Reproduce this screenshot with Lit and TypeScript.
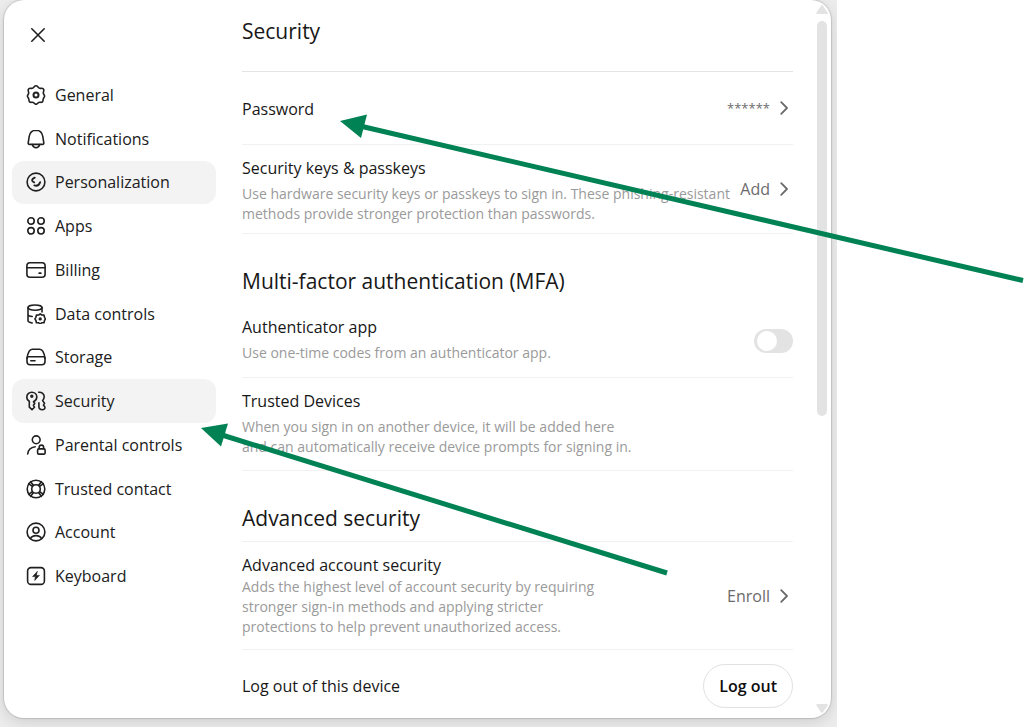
import { LitElement, html, css, svg, nothing, TemplateResult } from "lit";
import { customElement, property, state } from "lit/decorators.js";
import { classMap } from "lit/directives/class-map.js";

const icons: Record<string, TemplateResult> = {
  general: svg`<path d="M10 .8c1.500 0 2 1.700 3.200 2.300 1.300.7 3.200-.4 4.200.8 1.100 1.400-.1 2.700-.1 4 0 1.400 1.300 2.100 1.300 3.200s-.9 1.700-1.300 2.600c-.5 1.200.2 2.500-1 3.300-1.200.8-2.400-.1-3.500.4-1.100.5-1.500 1.900-2.800 1.900s-1.700-1.400-2.800-1.900c-1.100-.5-2.300.4-3.500-.4-1.200-.8-.5-2.100-1-3.300-.4-.9-1.300-1.500-1.300-2.600s1.300-1.800 1.300-3.200c0-1.300-1.200-2.600-.1-4 1-1.200 2.900-.1 4.200-.8C8 2.500 8.500.8 10 .8z"/><circle cx="10" cy="10" r="2.500" stroke-width="2"/>`,
  notifications: svg`<path d="M10 1.200c-3.800 0-6.300 2.800-6.800 6.300l-1 6.400c-.1.900.4 1.500 1.200 1.500h13.200c.8 0 1.300-.6 1.200-1.500l-1-6.400C16.300 4 13.800 1.200 10 1.200z"/><path d="M6.300 15.600c.6 2 2 3.200 3.700 3.200s3.100-1.200 3.700-3.200"/>`,
  personalization: svg`<circle cx="10" cy="10" r="8.900"/><path d="M8.800 5.600C7 6.300 6 7.300 6.100 8.500c.1 1 .9 1.500 2.100 1.900" stroke-width="1.800"/><path d="M8.300 13.400c2.700.9 5-.6 5.900-3.300" stroke-width="1.800"/>`,
  apps: svg`<circle cx="5" cy="5" r="3.200"/><circle cx="15" cy="5" r="3.200"/><circle cx="5" cy="14.800" r="3.200"/><circle cx="15" cy="14.800" r="3.200"/>`,
  billing: svg`<rect x=".9" y="2.700" width="18.200" height="14.600" rx="3"/><path d="M1 7.700h18"/><path d="M13.200 13.200h1.600" stroke-width="1.800"/>`,
  data: svg`<ellipse cx="9" cy="3.600" rx="7" ry="2.600"/><path d="M2 3.600v13c0 1.300 1.700 2.100 4.200 2.400M16 3.600v4.300M2 10.200c0 1.200 1.700 2 4.200 2.300"/><path d="M14.200 9.900l1.500 1.100 2.300.1.500 2.200 1 1.600-1 1.600-.5 2.200-2.300.1-1.500 1.100-1.500-1.100-2.300-.1-.5-2.200-1-1.600 1-1.600.5-2.200 2.300-.1z"/><circle cx="14.200" cy="14.900" r=".9"/>`,
  storage: svg`<path d="M1 11.300c.3-2.600 1-5 2.100-6.900C3.800 3 4.800 2.200 6.300 2.200h7.400c1.500 0 2.500.8 3.200 2.200 1.100 1.900 1.800 4.300 2.100 6.900"/><path d="M1 11.200c0-.9.600-1.400 1.500-1.400h15c.9 0 1.500.5 1.500 1.400v3.300c0 2-1.200 3.300-3.200 3.300H4.200c-2 0-3.200-1.300-3.200-3.300z"/><path d="M4.800 13.700h4.200"/>`,
  security: svg`<path d="M5.800 1.200C3 1.200.8 3.300.8 6c0 1.900.9 3.400 2.500 4.300v5.900l2.700 2.500 2.500-2.500-1.100-1.900 1.400-1.900-1.300-1.700C9.700 9.700 10.800 8.200 10.800 6c0-2.700-2.200-4.800-5-4.800z"/><circle cx="5.800" cy="5.200" r=".9"/><path d="M12.700 1.300c3.200-.3 5.500 1.600 5.500 4.500 0 1.500-.5 2.700-1.600 3.700l2 2.900-1.200 1.700 1.500 2c.3 1.600-.9 2.600-2.500 2.600-2 0-3.500-1-3.500-2.900v-4"/>`,
  parental: svg`<circle cx="10.200" cy="4.800" r="3.900"/><path d="M1.700 19c.4-4 3.200-6.700 7.500-7.300"/><rect x="11.600" y="13.900" width="7.500" height="5.200" rx="1.200"/><path d="M13.200 13.700v-1.400c0-1.300.9-2.200 2.200-2.200s2.200.9 2.200 2.200v1.400"/>`,
  trusted: svg`<circle cx="10" cy="10" r="8.800"/><circle cx="10" cy="10" r="4.300"/><path d="M4.600 2.700l2.800 3.600M2.700 4.600l3.600 2.800M15.400 2.700l-2.800 3.600M17.300 4.600l-3.600 2.800M4.600 17.300l2.800-3.600M2.700 15.400l3.600-2.800M15.400 17.300l-2.800-3.600M17.300 15.400l-3.600-2.800"/>`,
  account: svg`<circle cx="10" cy="10" r="8.900"/><circle cx="10" cy="8.200" r="3"/><path d="M4.400 16.700c.9-2 3-3.100 5.600-3.100s4.700 1.100 5.600 3.100"/>`,
  keyboard: svg`<rect x="1.600" y="1.600" width="16.800" height="16.800" rx="3.400"/><path d="M11.200 5.600L6.600 10.600h2.800l-.7 3.900 4.700-5.100h-2.900z" fill="currentColor" stroke-width=".6"/>`,
};

const sections: [string, string][] = [
  ["general", "General"],
  ["notifications", "Notifications"],
  ["personalization", "Personalization"],
  ["apps", "Apps"],
  ["billing", "Billing"],
  ["data", "Data controls"],
  ["storage", "Storage"],
  ["security", "Security"],
  ["parental", "Parental controls"],
  ["trusted", "Trusted contact"],
  ["account", "Account"],
  ["keyboard", "Keyboard"],
];

@customElement("settings-nav")
class SettingsNav extends LitElement {
  @state() current = "security";
  static styles = css`
    :host { display: block; color: #202020; }
    .close {
      display: flex; align-items: center; justify-content: center;
      width: 36px; height: 36px; margin: 17px 0 20px 8px; padding: 0;
      border: 0; border-radius: 8px; background: none; color: inherit;
    }
    .list { display: grid; grid-auto-rows: 1fr; min-height: 525px; }
    .item {
      display: flex; align-items: center; gap: 9px; padding: 0 14px;
      border: 0; border-radius: 12px; background: none; color: inherit;
      font: inherit; font-size: 16px; line-height: 24px; text-align: left;
    }
    .item.shaded { background: #f3f3f3; }
    svg {
      width: 20px; height: 20px; flex: none; fill: none; stroke: currentColor;
      stroke-width: 1.6; stroke-linecap: round; stroke-linejoin: round;
    }
    .close svg { width: 16px; height: 16px; }
  `;
  render() {
    return html`
      <button class="close" aria-label="Close">
        <svg viewBox="0 0 16 16"><path d="M1.800 1.800l12.400 12.400M14.200 1.800L1.800 14.200" /></svg>
      </button>
      <nav class="list" aria-label="Settings">
        ${sections.map(([id, label]) => html`
          <button
            class=${classMap({ item: true, shaded: id === this.current || id === "personalization" })}
            aria-current=${id === this.current ? "page" : nothing}
            @click=${() => (this.current = id)}
          ><svg viewBox="0 0 20 20" aria-hidden="true">${icons[id]}</svg><span>${label}</span></button>
        `)}
      </nav>
    `;
  }
}

@customElement("setting-row")
class SettingRow extends LitElement {
  @property() heading = "";
  @property({ attribute: false }) lines: string[] = [];
  static styles = css`
    :host {
      display: flex; align-items: center; justify-content: space-between; gap: 8px;
      border-bottom: 1px solid #f1f1f1;
    }
    .text { padding: 11px 0 13px; min-width: 0; }
    .title { margin: 0; font-size: 16px; font-weight: 400; line-height: 24px; color: #171717; }
    .desc { margin: 4px 0 0; font-size: 14px; line-height: 20px; color: #9a9a9a; }
    :host([tight]) .desc { margin-top: 0; }
    :host([tight]) .text { padding-bottom: 12px; }
    :host([plain]) { min-height: 72px; }
    :host([plain]) .text { padding: 12px 0 11px; }
    :host([roomy]) .text { padding-bottom: 14px; }
    :host([snug]) .text { padding-bottom: 9px; }
    :host([last]) { border-bottom: 0; padding: 14px 0 10px; }
    :host([last]) .text { padding: 0; }
  `;
  render() {
    return html`
      <div class="text">
        <h3 class="title">${this.heading}</h3>
        ${this.lines.length
          ? html`<p class="desc">${this.lines.map((l, i) => html`${i ? html`<br />` : nothing}${l}`)}</p>`
          : nothing}
      </div>
      <slot></slot>
    `;
  }
}

@customElement("app-root")
class AppRoot extends LitElement {
  @state() authenticator = false;
  static styles = css`
    :host {
      display: block; position: relative; min-height: 100vh; background: #fff;
      font-family: "Open Sans", "Noto Sans", sans-serif;
    }
    .page {
      display: grid; grid-template-columns: minmax(0, 837fr) minmax(0, 187fr);
      min-height: 100vh;
    }
    .backdrop { background: #ececec; padding: 0 6px 8px 4px; overflow: hidden; }
    .dialog {
      display: grid; grid-template-columns: 212px minmax(0, 1fr) 14px;
      column-gap: 24px; padding: 0 0 0 8px; min-height: calc(100vh - 9px);
      box-sizing: border-box; border-radius: 20px; background: #fff;
      box-shadow: 0 0 1px 1px #00000022, 0 4px 14px #00000020;
    }
    .nav { margin-right: 8px; }
    .main { margin-left: -6px; }
    .title, .subtitle { margin: 0; font-size: 21px; font-weight: 400; line-height: 28px; color: #171717; }
    .title { padding: 17px 0 26px; border-bottom: 1px solid #e4e4e4; }
    .subtitle { padding: 33px 0 9px; }
    .subtitle.ruled { border-bottom: 1px solid #f1f1f1; }
    .action {
      display: flex; flex: none; align-items: center; gap: 7px; padding: 0; border: 0;
      background: none; font: inherit; font-size: 16px; line-height: 24px; color: #6b6b6b;
    }
    .action .mask { font-size: 13px; }
    .action svg {
      width: 16px; height: 16px; fill: none; stroke: currentColor; stroke-width: 1.8;
      stroke-linecap: round; stroke-linejoin: round;
    }
    .switch {
      appearance: none; flex: none; width: 39px; height: 24px; margin: 0; padding: 2px 3px;
      box-sizing: border-box; border-radius: 12px; background: #e3e3e3;
    }
    .switch::before {
      content: ""; display: block; width: 20px; height: 20px; border-radius: 50%; background: #fff;
    }
    .switch:checked { background: #008255; }
    .switch:checked::before { margin-left: auto; }
    .logout {
      flex: none; height: 44px; padding: 0 15px; border: 1px solid #e1e1e1; border-radius: 22px;
      background: #fff; font: inherit; font-size: 16px; font-weight: 600; color: #0d0d0d;
    }
    .track { display: flex; flex-direction: column; width: 10px; padding: 5px 0; }
    .thumb { flex: 395 0 0; margin-top: 7px; border-radius: 5px; background: #e3e3e3; }
    .rest { flex: 288 0 0; }
    .track svg { width: 12px; height: 9px; margin-left: -1px; flex: none; fill: #e3e3e3; }
    .arrows {
      position: absolute; top: 0; left: 0; width: 100%; pointer-events: none;
      stroke: #008255; fill: #008255; stroke-width: 5;
    }
    .head { stroke: none; }
  `;
  private action(label: string, name: string, mask = false) {
    return html`
      <button class="action" aria-label=${name}>
        <span class=${classMap({ mask })}>${label}</span>
        <svg viewBox="0 0 16 16" aria-hidden="true"><path d="M4.200 2.200L10 8l-5.800 5.800" /></svg>
      </button>
    `;
  }
  render() {
    return html`
      <div class="page">
        <div class="backdrop">
          <section class="dialog" role="dialog" aria-label="Settings">
            <settings-nav class="nav"></settings-nav>
            <main class="main">
              <h1 class="title">Security</h1>
              <setting-row plain heading="Password">${this.action("******", "Change password", true)}</setting-row>
              <setting-row snug heading="Security keys &amp; passkeys" .lines=${[
                "Use hardware security keys or passkeys to sign in. These phishing-resistant",
                "methods provide stronger protection than passwords.",
              ]}>${this.action("Add", "Add security key")}</setting-row>
              <h2 class="subtitle">Multi-factor authentication (MFA)</h2>
              <setting-row roomy heading="Authenticator app" .lines=${["Use one-time codes from an authenticator app."]}>
                <input
                  class="switch" type="checkbox" role="switch" aria-label="Authenticator app"
                  .checked=${this.authenticator}
                  @change=${(e: Event) => (this.authenticator = (e.target as HTMLInputElement).checked)}
                />
              </setting-row>
              <setting-row heading="Trusted Devices" .lines=${[
                "When you sign in on another device, it will be added here",
                "and can automatically receive device prompts for signing in.",
              ]}></setting-row>
              <h2 class="subtitle ruled">Advanced security</h2>
              <setting-row tight heading="Advanced account security" .lines=${[
                "Adds the highest level of account security by requiring",
                "stronger sign-in methods and applying stricter",
                "protections to help prevent unauthorized access.",
              ]}>${this.action("Enroll", "Enroll in advanced account security")}</setting-row>
              <setting-row last heading="Log out of this device">
                <button class="logout">Log out</button>
              </setting-row>
            </main>
            <div class="track" aria-hidden="true">
              <svg viewBox="0 0 12 9"><path d="M6 0Q6.600 0 7 .7L11.600 7.500Q12 9 11 9H1Q0 9 .4 7.500L5 .7Q5.400 0 6 0z" /></svg>
              <div class="thumb"></div>
              <div class="rest"></div>
              <svg viewBox="0 0 12 9"><path d="M6 9Q6.600 9 7 8.300L11.600 1.500Q12 0 11 0H1Q0 0 .4 1.500L5 8.300Q5.400 9 6 9z" /></svg>
            </div>
          </section>
        </div>
      </div>
      <svg class="arrows" viewBox="0 0 1024 727" aria-hidden="true">
        <path d="M1023 280.500L360 126" />
        <path class="head" d="M340 121L367 114.500L361 138z" />
        <path d="M667 573L222 435" />
        <path class="head" d="M201 428L228 423.500L221 446.500z" />
      </svg>
    `;
  }
}
